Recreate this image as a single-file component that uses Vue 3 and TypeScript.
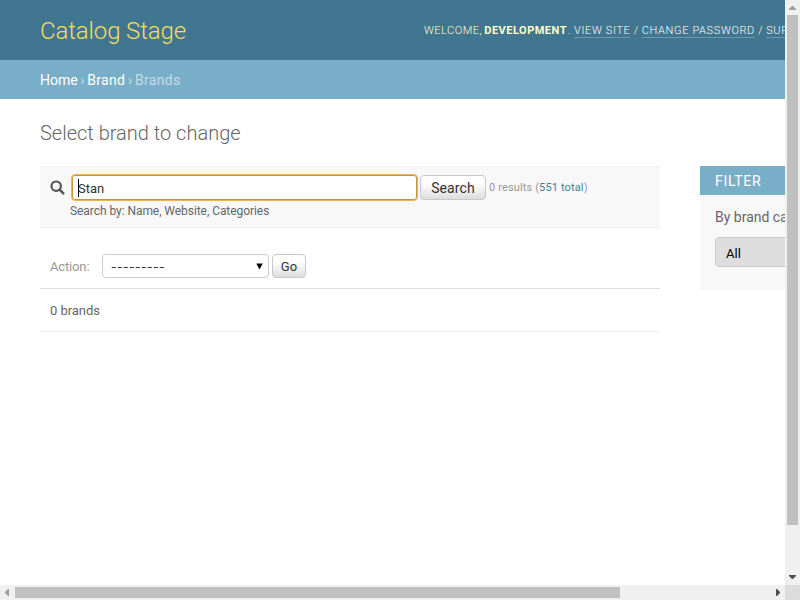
<script setup lang="ts">
import { ref } from 'vue'

interface Crumb { label: string; current?: boolean }

const crumbs: Crumb[] = [{ label: 'Home' }, { label: 'Brand' }, { label: 'Brands', current: true }]
const userLinks: string[] = ['View site', 'Change password', 'Support']
const query = ref('Stan')
</script>

<template>
  <div class="window">
    <div class="viewport">
      <div class="page">
        <header class="header">
          <h1 class="branding">Catalog Stage</h1>
          <div class="user-tools">
            Welcome, <strong>Development</strong>.
            <template v-for="(link, i) in userLinks" :key="link"><template v-if="i"> / </template><a>{{ link }}</a></template>
          </div>
        </header>
        <nav class="breadcrumbs">
          <template v-for="(c, i) in crumbs" :key="c.label"><template v-if="i"> › </template><span :class="{ link: !c.current }">{{ c.label }}</span></template>
        </nav>
        <main class="content">
          <h2 class="title">Select brand to change</h2>
          <div class="columns">
            <section class="changelist">
              <div class="toolbar">
                <div class="search-row">
                  <svg class="search-icon" width="15" height="15" viewBox="0 0 15 15">
                    <circle cx="6.2" cy="6.2" r="4.7" fill="none" stroke="#555" stroke-width="2.2" />
                    <path d="M9.7 9.7L13.3 13.3" stroke="#555" stroke-width="2.5" stroke-linecap="round" />
                  </svg>
                  <div class="search-input"><span class="caret"></span>{{ query }}</div>
                  <button class="btn search-btn">Search</button>
                  <span class="quiet">0 results (<a>551 total</a>)</span>
                </div>
                <div class="help">Search by: Name, Website, Categories</div>
              </div>
              <div class="actions">
                <span class="action-label">Action:</span>
                <div class="select">
                  <span class="dashes">---------</span>
                  <svg width="7" height="7" viewBox="0 0 7 7"><path d="M0.3 0.4H6.7L3.5 6.4Z" fill="#000" /></svg>
                </div>
                <button class="btn go-btn">Go</button>
              </div>
              <p class="paginator">0 brands</p>
            </section>
            <aside class="filter">
              <h2>Filter</h2>
              <h3>By brand category</h3>
              <div class="filter-select">All</div>
            </aside>
          </div>
        </main>
      </div>
    </div>
    <div class="bar vertical">
      <svg width="15" height="15" viewBox="0 0 15 15"><path d="M4 10H11V9L8 6H7L4 9Z" fill="#a0a0a0" /></svg>
      <div class="thumb"></div>
      <span class="space"></span>
      <svg width="15" height="15" viewBox="0 0 15 15"><path d="M4 5H11V6L8 9H7L4 6Z" fill="#505050" /></svg>
    </div>
    <div class="bar horizontal">
      <svg width="15" height="15" viewBox="0 0 15 15"><path d="M9 4V11H8L5 8V7L8 4Z" fill="#a0a0a0" /></svg>
      <div class="thumb"></div>
      <span class="space"></span>
      <svg width="15" height="15" viewBox="0 0 15 15"><path d="M6 4V11H7L10 8V7L7 4Z" fill="#505050" /></svg>
    </div>
    <div class="corner"></div>
  </div>
</template>

<style>
body {
  margin: 0;
  overflow: hidden;
}
</style>

<style scoped>
* {
  box-sizing: border-box;
}
.window {
  display: grid;
  grid-template: 585px 15px / 785px 15px;
  width: 800px;
  height: 600px;
  overflow: hidden;
  background: #fff;
  font-family: Roboto, 'Liberation Sans', sans-serif;
  font-size: 14px;
  color: #333;
}
.viewport {
  overflow: hidden;
}
.page {
  width: 1020px;
}
.header {
  display: flex;
  align-items: center;
  height: 60px;
  padding: 2px 0 0 40px;
  background: #417690;
  color: #ffc;
}
.branding {
  width: 384px;
  margin: 0;
  font-size: 24px;
  line-height: 30px;
  font-weight: 300;
  letter-spacing: -0.12px;
  color: #f5dd5d;
}
.user-tools {
  font-size: 11px;
  line-height: 14px;
  font-weight: 300;
  letter-spacing: 0.5px;
  text-transform: uppercase;
  white-space: nowrap;
}
.user-tools strong {
  margin: 0 0.8px 0 -1px;
  font-weight: 700;
}
.user-tools a {
  letter-spacing: 0.64px;
  color: #fff;
  border-bottom: 1px solid rgba(255, 255, 255, 0.25);
}
.breadcrumbs {
  height: 39px;
  padding: 12px 40px 0;
  background: #79aec8;
  color: #c4dce8;
  line-height: 16px;
  word-spacing: -0.8px;
  white-space: pre;
}
.breadcrumbs span {
  letter-spacing: 0.33px;
}
.breadcrumbs .link {
  color: #fff;
}
.breadcrumbs .link:first-child {
  letter-spacing: 0;
}
.content {
  padding: 22px 40px;
}
.title {
  margin: 0 0 21px;
  font-size: 20px;
  line-height: 24px;
  font-weight: 300;
  color: #666;
}
.columns {
  display: flex;
  align-items: flex-start;
  gap: 40px;
}
.changelist {
  width: 620px;
}
.toolbar {
  height: 62px;
  padding: 7px 10px 0;
  background: #f8f8f8;
  border-top: 1px solid #eee;
  border-bottom: 1px solid #eee;
}
.search-row {
  display: flex;
  align-items: center;
  height: 27px;
}
.search-icon {
  margin-right: 6px;
}
.search-input {
  display: flex;
  align-items: center;
  width: 347px;
  height: 27px;
  padding: 1px 0 0 6px;
  border: 1px solid #e9b451;
  border-radius: 4px;
  background: #fff;
  box-shadow: inset 0 0 0 1px #c99737;
  font-size: 13px;
}
.caret {
  width: 1px;
  height: 18px;
  margin-right: -1px;
  background: #000;
}
.btn {
  padding: 0;
  border: 1px solid #c8c8c8;
  border-radius: 4px;
  background: linear-gradient(#fff 30%, #ddd);
  font-family: inherit;
  color: #333;
}
.search-btn {
  width: 66px;
  height: 25px;
  margin: 0 3px 0 2px;
  font-size: 14px;
  letter-spacing: 0.1px;
}
.quiet {
  font-size: 11px;
  letter-spacing: 0.14px;
  color: #999;
}
.quiet a {
  color: #447e9b;
}
.help {
  padding: 3px 20px 0;
  font-size: 12px;
  line-height: 15px;
  letter-spacing: -0.06px;
  color: #666;
}
.actions {
  display: flex;
  align-items: center;
  height: 61px;
  padding: 16px 10px 0;
  border-bottom: 1px solid #ddd;
  font-size: 13px;
}
.action-label {
  width: 52px;
  letter-spacing: -0.15px;
  color: #999;
}
.select {
  display: flex;
  align-items: center;
  justify-content: space-between;
  width: 167px;
  height: 24px;
  padding: 0 5px 0 8px;
  border: 1px solid #ccc;
  border-radius: 4px;
  background: #fff;
  color: #000;
}
.dashes {
  font-family: 'Open Sans', 'Liberation Sans', sans-serif;
  font-size: 17px;
  font-weight: 300;
  line-height: 20px;
  letter-spacing: 0.53px;
}
.go-btn {
  width: 34px;
  height: 24px;
  margin-left: 3px;
  font-size: 13px;
}
.paginator {
  height: 43px;
  margin: 0;
  padding: 14px 10px 0;
  border-bottom: 1px solid #eee;
  font-size: 13px;
  line-height: 16px;
  letter-spacing: -0.05px;
  color: #666;
}
.filter {
  width: 240px;
  height: 124px;
  background: #f8f8f8;
}
.filter h2 {
  height: 29px;
  margin: 0;
  padding: 0 15px;
  background: #79aec8;
  font-size: 14px;
  line-height: 31px;
  font-weight: 400;
  letter-spacing: 0.7px;
  text-transform: uppercase;
  color: #fff;
}
.filter h3 {
  margin: 14px 15px 12px;
  font-size: 14px;
  line-height: 16px;
  font-weight: 400;
  color: #666;
}
.filter-select {
  height: 30px;
  margin: 0 15px;
  padding: 2px 10px 0;
  border: 1px solid #ccc;
  border-radius: 4px;
  background: #ddd;
  font-size: 13px;
  line-height: 28px;
  color: #000;
}
.bar {
  display: flex;
  background: #f0f0f0;
}
.bar svg {
  flex: none;
}
.space {
  flex: 1;
}
.thumb {
  background: #c0c0c0;
}
.vertical {
  flex-direction: column;
}
.vertical .thumb {
  width: 11px;
  height: 510px;
  margin-left: 2px;
}
.horizontal .thumb {
  width: 605px;
  height: 11px;
  margin-top: 2px;
}
.corner {
  background: #dcdcdc;
}
</style>
